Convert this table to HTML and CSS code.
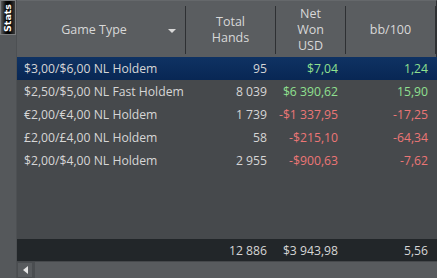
FILE: index.html
```html
<!DOCTYPE html>
<html>
<head>
<meta charset="utf-8">
<link rel="stylesheet" href="styles.css">
</head>
<body>
<div class="app">
  <aside class="side">
    <div class="tab"><span>Stats</span></div>
  </aside>
  <main class="grid">
    <div class="head">
      <div class="hc game"><span>Game Type</span><i class="caret"></i></div>
      <div class="hc">Total<br>Hands</div>
      <div class="hc">Net<br>Won<br>USD</div>
      <div class="hc">bb/100</div>
    </div>
    <div class="rows">
      <div class="row sel"><span class="c1">$3,00/$6,00 NL Holdem</span><span class="c2">95</span><span class="c3 pos">$7,04</span><span class="c4 pos">1,24</span></div>
      <div class="row"><span class="c1">$2,50/$5,00 NL Fast Holdem</span><span class="c2">8 039</span><span class="c3 pos">$6 390,62</span><span class="c4 pos">15,90</span></div>
      <div class="row"><span class="c1">€2,00/€4,00 NL Holdem</span><span class="c2">1 739</span><span class="c3 neg">-$1 337,95</span><span class="c4 neg">-17,25</span></div>
      <div class="row"><span class="c1">£2,00/£4,00 NL Holdem</span><span class="c2">58</span><span class="c3 neg">-$215,10</span><span class="c4 neg">-64,34</span></div>
      <div class="row"><span class="c1">$2,00/$4,00 NL Holdem</span><span class="c2">2 955</span><span class="c3 neg">-$900,63</span><span class="c4 neg">-7,62</span></div>
    </div>
    <div class="row foot"><span class="c1"></span><span class="c2">12 886</span><span class="c3">$3 943,98</span><span class="c4">5,56</span></div>
    <div class="hscroll">
      <div class="btn"><i class="larrow"></i></div>
      <div class="track"></div>
    </div>
  </main>
</div>
</body>
</html>
```
FILE: styles.css
```css
* { box-sizing: border-box; }
html, body { margin: 0; padding: 0; }
body {
  width: 437px;
  height: 278px;
  overflow: hidden;
  background: #55585b;
  font-family: "Open Sans", "Noto Sans", sans-serif;
  font-size: 12.2px;
  color: #d6d6d6;
}
.app { display: flex; height: 278px; }
.side {
  width: 17px;
  flex: none;
  background: #55585b;
  border-right: 1px solid #4d5053;
}
.tab {
  width: 16px;
  height: 35px;
  background: linear-gradient(90deg, #5a5a5a 0%, #0a0a0a 35%, #000 60%, #3a3a3a 100%);
  border: 1px solid #7a7c7e;
  display: flex;
  align-items: center;
  justify-content: center;
}
.tab span {
  writing-mode: vertical-rl;
  transform: rotate(180deg);
  color: #fff;
  font-family: "DejaVu Sans", sans-serif;
  font-weight: bold;
  font-size: 9.5px;
  line-height: 12px;
}
.grid {
  width: 420px;
  display: flex;
  flex-direction: column;
  background: #46494c;
}
.head {
  height: 57px;
  flex: none;
  display: grid;
  grid-template-columns: 169px 90px 70px 90px 1px;
  padding: 5px 0 3px 0;
  background: #5a5d60;
  border-top: 1px solid #65686b;
  border-right: 1px solid #2e3033;
}
.hc {
  display: flex;
  align-items: center;
  justify-content: center;
  text-align: center;
  line-height: 16px;
  border-right: 1px solid #2e3033;
  color: #d8d8d8;
  font-size: 12.5px;
}
.hc.game { position: relative; padding-right: 14px; }
.caret {
  position: absolute;
  right: 9px;
  top: 23px;
  width: 0; height: 0;
  border-left: 4px solid transparent;
  border-right: 4px solid transparent;
  border-top: 4px solid #d8d8d8;
}
.rows { flex: 1; }
.row {
  display: grid;
  grid-template-columns: 169px 90px 70px 90px;
  height: 23px;
  align-items: center;
  white-space: nowrap;
}
.row.sel { background: linear-gradient(#0f3263, #082754); }
.c1 { padding-left: 7px; }
.c2, .c3, .c4 { text-align: right; }
.c2 { padding-right: 9px; }
.c3 { padding-right: 8px; }
.c4 { padding-right: 8px; }
.pos { color: #90e090; }
.neg { color: #ec7676; }
.foot {
  height: 22px;
  flex: none;
  background: #222629;
  margin-bottom: 1px;
}
.hscroll {
  height: 16px;
  flex: none;
  display: flex;
  gap: 2px;
  background: #4a4d50;
}
.btn {
  width: 16px;
  background: #585b5e;
  border: 1px solid #4a4d50;
  display: flex;
  align-items: center;
  justify-content: center;
}
.larrow {
  width: 0; height: 0;
  border-top: 4px solid transparent;
  border-bottom: 4px solid transparent;
  border-right: 5px solid #e4e4e4;
}
.track { flex: 1; background: #585b5e; }
```
